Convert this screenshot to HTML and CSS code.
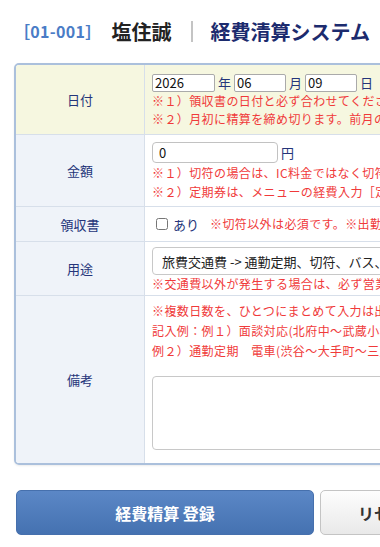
FILE: index.html
```
<!DOCTYPE html>
<html lang="ja">
<head>
    <meta charset="UTF-8">
    <meta name="viewport" content="width=device-width, initial-scale=1.0">
    <title>経費清算システム</title>
    <link rel="stylesheet" href="styles.css">
</head>
<body>
    <div class="page">
        <header class="page-header">
            <span class="staff-code">［01-001］</span>
            <span class="staff-name">塩住誠</span>
            <span class="divider"></span>
            <span class="system-name">経費清算システム</span>
        </header>

        <form class="expense-form" onsubmit="return false;">
            <div class="form-table">
                <div class="form-row row-date">
                    <div class="form-label">日付</div>
                    <div class="form-field">
                        <div class="field-line">
                            <input type="text" class="date-box year" value="2026"><span class="unit">年</span><input type="text" class="date-box" value="06"><span class="unit">月</span><input type="text" class="date-box" value="09"><span class="unit">日</span>
                        </div>
                        <p class="note">※１）領収書の日付と必ず合わせてください。</p>
                        <p class="note">※２）月初に精算を締め切ります。前月の入力は締め切り前に済ませてください。</p>
                    </div>
                </div>
                <div class="form-row row-amount">
                    <div class="form-label">金額</div>
                    <div class="form-field">
                        <div class="field-line">
                            <input type="text" class="amount-box" value="0"><span class="unit">円</span>
                        </div>
                        <p class="note">※１）切符の場合は、IC料金ではなく切符料金で入力してください。</p>
                        <p class="note">※２）定期券は、メニューの経費入力［定期券］から入力してください。</p>
                    </div>
                </div>
                <div class="form-row row-receipt">
                    <div class="form-label">領収書</div>
                    <div class="form-field">
                        <label class="check"><input type="checkbox"><span>あり</span></label>
                        <span class="note inline">※切符以外は必須です。※出勤伝票と一緒に提出してください。</span>
                    </div>
                </div>
                <div class="form-row row-purpose">
                    <div class="form-label">用途</div>
                    <div class="form-field">
                        <select class="purpose-select">
                            <option>旅費交通費 -&gt; 通勤定期、切符、バス、出張費など</option>
                            <option>会議費</option>
                            <option>消耗品費</option>
                        </select>
                        <p class="note">※交通費以外が発生する場合は、必ず営業まで事前に相談してください。</p>
                    </div>
                </div>
                <div class="form-row row-memo">
                    <div class="form-label">備考</div>
                    <div class="form-field">
                        <p class="note">※複数日数を、ひとつにまとめて入力は出来ません。</p>
                        <p class="note">記入例：例１）面談対応(北府中～武蔵小杉～北府中)</p>
                        <p class="note">例２）通勤定期　電車(渋谷～大手町～三越前)　6ヶ月</p>
                        <textarea class="memo-box"></textarea>
                    </div>
                </div>
            </div>

            <div class="form-buttons">
                <button type="submit" class="btn btn-primary">経費精算 登録</button>
                <button type="reset" class="btn btn-reset">リセット</button>
            </div>
        </form>
    </div>
</body>
</html>
```

FILE: styles.css
```
html, body {
    margin: 0;
    padding: 0;
    overflow-x: hidden;
}

body {
    font-family: "Noto Sans CJK JP", "Noto Sans", sans-serif;
    color: #222;
    background: #fff;
}

.page {
    width: 780px;
    padding: 0 0 20px 14px;
}

/* header */
.page-header {
    display: flex;
    align-items: center;
    height: 30px;
    padding: 16px 0 17px 6px;
}

.staff-code {
    color: #4a7cc6;
    font-size: 16px;
    font-weight: bold;
    margin-left: -6px;
    letter-spacing: 0.3px;
}

.staff-name {
    margin-left: 10px;
    font-size: 20px;
    font-weight: bold;
    color: #222;
}

.divider {
    width: 2px;
    height: 21px;
    margin: 0 18px 0 19px;
    background: #c4c4c4;
}

.system-name {
    font-size: 20px;
    font-weight: bold;
    color: #1c2b6e;
}

/* form table */
.form-table {
    border: 2px solid #abc0dc;
    border-radius: 5px;
    overflow: hidden;
    box-shadow: 0 1px 2px rgba(0, 0, 0, 0.08);
}

.form-row {
    display: grid;
    grid-template-columns: 129px 1fr;
    border-bottom: 1px solid #d7dfea;
}

.form-row:last-child {
    border-bottom: none;
}

.form-label {
    display: flex;
    align-items: center;
    justify-content: center;
    background-color: #eff3f9;
    color: #25357a;
    font-size: 13px;
    border-right: 1px solid #d7dfea;
}

.form-field {
    padding: 0 6px 0 7px;
    white-space: nowrap;
    font-size: 13px;
    color: #25357a;
}

.row-date {
    height: 69px;
}

.row-date .form-label,
.row-date .form-field {
    background-color: #f6f7e0;
}

.row-date .form-field {
    padding-top: 8px;
}

.row-amount {
    height: 71px;
}

.row-amount .form-field {
    padding-top: 7px;
}

.row-amount .note {
    line-height: 19px;
}

.row-receipt {
    height: 34px;
}

.row-receipt .form-field {
    display: flex;
    align-items: center;
}

.row-purpose {
    height: 53px;
}

.row-purpose .form-field {
    padding-top: 5px;
}

.row-memo {
    height: 167px;
}

.row-memo .form-field {
    padding-top: 5px;
}

.row-memo .note {
    line-height: 20px;
}

.note {
    margin: 0;
    color: #f03a3a;
    font-size: 12px;
    line-height: 18px;
    letter-spacing: 0.4px;
}

.note.inline {
    margin-left: 11px;
}

.field-line {
    display: flex;
    align-items: center;
}

.unit {
    margin: 0 3px;
}

input[type="text"] {
    font-family: inherit;
    font-size: 13px;
    color: #111;
    border: 1px solid #aaa;
    padding: 0 2px;
    box-sizing: border-box;
}

.date-box {
    width: 52px;
    height: 18px;
    border-radius: 2px;
}

.date-box.year {
    width: 63px;
}

.amount-box {
    width: 126px;
    height: 21px;
    border-radius: 4px;
    border-color: #c2c2c2 !important;
    padding-left: 6px !important;
}

.check {
    display: inline-flex;
    align-items: center;
    gap: 4px;
    margin-left: 4px;
}

.check input {
    margin: 0 1px 0 0;
    width: 12px;
    height: 12px;
}

.purpose-select {
    display: block;
    width: 460px;
    height: 28px;
    font-family: inherit;
    font-size: 13px;
    color: #222;
    padding: 0 5px;
    border: 1px solid #c8c8c8;
    border-radius: 4px;
    background: #fff;
}

.memo-box {
    display: block;
    width: 560px;
    height: 74px;
    margin-top: 15px;
    border: 1px solid #c8c8c8;
    border-radius: 4px;
    resize: none;
    box-sizing: border-box;
}

/* buttons */
.form-buttons {
    display: flex;
    gap: 6px;
    margin-top: 25px;
}

.btn {
    height: 45px;
    border-radius: 5px;
    font-family: inherit;
    font-size: 16px;
    font-weight: bold;
    cursor: pointer;
}

.btn-primary {
    width: 298px;
    margin-left: 2px;
    color: #fff;
    border: 1px solid #4670ad;
    background: linear-gradient(#5b87c6, #4572b1);
}

.btn-reset {
    width: 140px;
    color: #333;
    border: 1px solid #c4c4c4;
    background: linear-gradient(#fdfdfd, #e9e9e9);
}
```
